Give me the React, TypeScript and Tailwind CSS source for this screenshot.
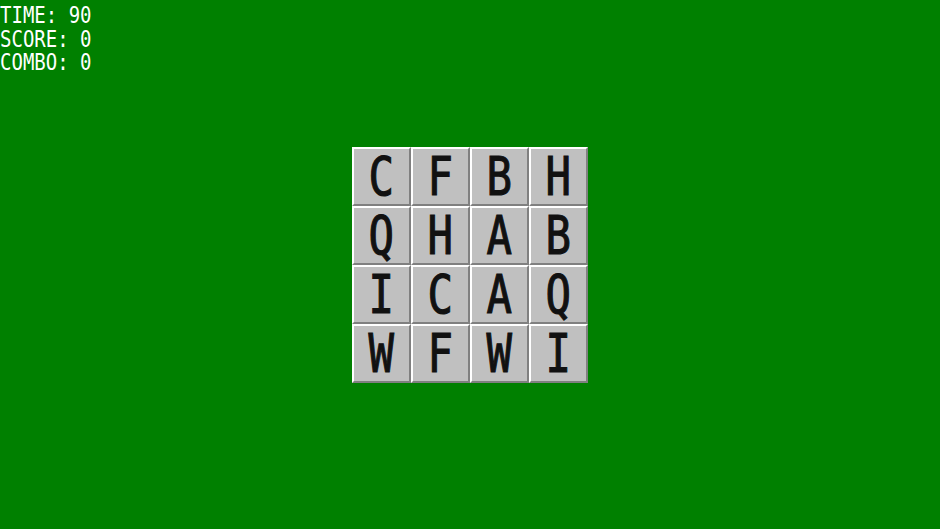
import React from "react";

const letters = ["C", "F", "B", "H", "Q", "H", "A", "B", "I", "C", "A", "Q", "W", "F", "W", "I"];

export default function App() {
  return (
    <div className="relative w-[940px] h-[529px] bg-[#008000] overflow-hidden">
      <div className="absolute left-0 top-[3px] origin-top-left scale-y-[1.18] text-white font-['DejaVu_Sans_Mono',monospace] text-[19px] leading-[20px] whitespace-pre">
        <div>TIME: 90</div>
        <div>SCORE: 0</div>
        <div>COMBO: 0</div>
      </div>
      <div className="flex h-full items-center justify-center">
        <div className="grid grid-cols-4 w-[236px]">
          {letters.map((l, i) => (
            <div
              key={i}
              className="w-[59px] h-[59px] bg-[#c0c0c0] border-2 border-t-white border-l-white border-r-[#808080] border-b-[#808080] flex items-center justify-center"
            >
              <span className="inline-block scale-x-[0.9] scale-y-[1.12] font-['DejaVu_Sans_Mono',monospace] font-normal text-[47px] leading-none text-[#111] [-webkit-text-stroke:1px_#111]">{l}</span>
            </div>
          ))}
        </div>
      </div>
    </div>
  );
}
